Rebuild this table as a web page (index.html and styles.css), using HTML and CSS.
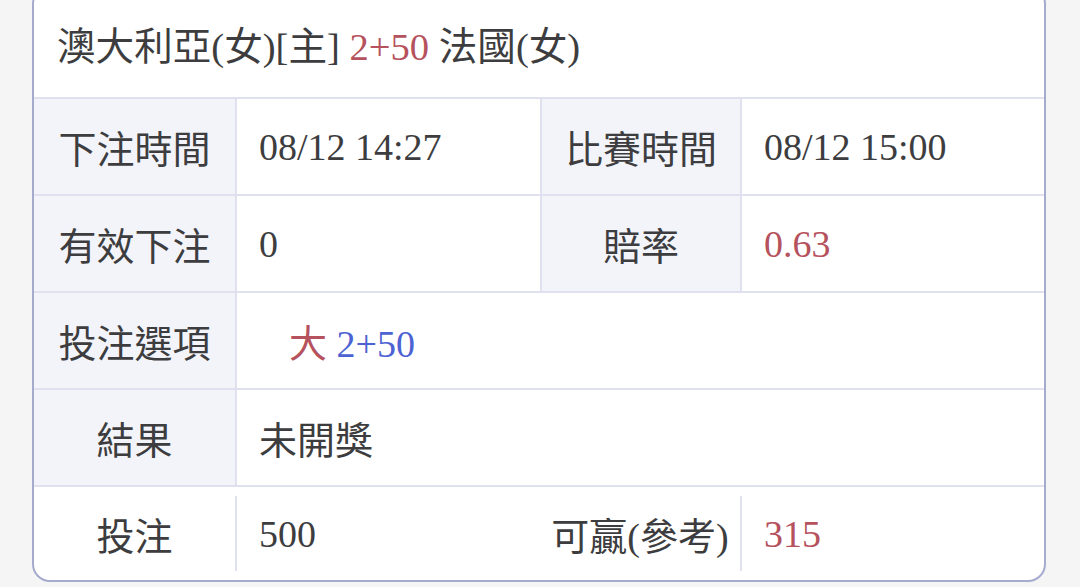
FILE: index.html
```html
<!DOCTYPE html>
<html lang="zh-Hant">
<head>
<meta charset="utf-8">
<title>注單詳情</title>
<link rel="stylesheet" href="styles.css">
</head>
<body>
<div class="card">
  <div class="title"><span>澳大利亞(女)[主] <span class="red">2+50</span> 法國(女)</span></div>
  <div class="grid">
    <div class="label">下注時間</div>
    <div class="value">08/12 14:27</div>
    <div class="label">比賽時間</div>
    <div class="value">08/12 15:00</div>

    <div class="label">有效下注</div>
    <div class="value">0</div>
    <div class="label">賠率</div>
    <div class="value red">0.63</div>

    <div class="label">投注選項</div>
    <div class="value wide pick"><span><span class="red">大</span> <span class="blue">2+50</span></span></div>

    <div class="label">結果</div>
    <div class="value wide">未開獎</div>
  </div>
  <div class="foot">
    <div class="f-label">投注</div>
    <div class="f-value">500</div>
    <div class="f-label">可贏(參考)</div>
    <div class="f-value red">315</div>
  </div>
</div>
</body>
</html>
```

FILE: styles.css
```css
html, body {
  margin: 0;
  padding: 0;
  background: #f5f5f6;
}

body {
  font-family: "Liberation Serif", "Noto Sans CJK TC", serif;
  font-size: 38px;
  color: #3d3d40;
  overflow: hidden;
  height: 587px;
}

.card {
  margin: -14px 34px 0 32px;
  border: 2px solid #a6aacd;
  border-radius: 18px;
  background: #ffffff;
  overflow: hidden;
}

.title {
  height: 109px;
  display: flex;
  align-items: center;
  padding-left: 23px;
  border-bottom: 2px solid #dfe1ef;
  white-space: nowrap;
  font-size: 38.6px;
}

.red { color: #b5525d; }
.blue { color: #4d62d3; }

.grid {
  display: grid;
  grid-template-columns: 201px 303px 198px 1fr;
  grid-auto-rows: 95px;
  gap: 2px;
  background: #dfe1ef;
  border-bottom: 2px solid #dfe1ef;
}

.label {
  background: #f3f4fa;
  display: flex;
  align-items: center;
  justify-content: center;
  white-space: nowrap;
}

.value {
  background: #ffffff;
  display: flex;
  align-items: center;
  padding-left: 22px;
  white-space: nowrap;
}

.wide {
  grid-column: span 3;
}

.pick {
  padding-left: 52px;
}

.foot {
  display: grid;
  grid-template-columns: 201px 305px 200px 1fr;
  height: 75px;
  padding: 9px 0;
}

.f-label {
  display: flex;
  align-items: center;
  justify-content: center;
  white-space: nowrap;
}

.f-value {
  display: flex;
  align-items: center;
  padding-left: 22px;
  border-left: 2px solid #dfe1ef;
  white-space: nowrap;
}
```
